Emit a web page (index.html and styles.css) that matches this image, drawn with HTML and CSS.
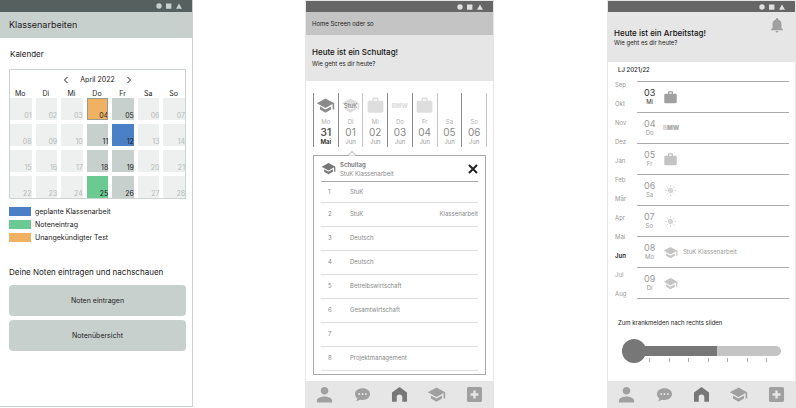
FILE: index.html
```html
<!DOCTYPE html>
<html lang="de">
<head>
<meta charset="utf-8">
<title>Klassenarbeiten</title>
<link rel="stylesheet" href="styles.css">
</head>
<body>
<svg class="sprite" aria-hidden="true">
  <symbol id="school" viewBox="0 0 24 24"><path d="M5 13.18v4L12 21l7-3.82v-4L12 17l-7-3.82zM12 3L1 9l11 6 9-4.91V17h2V9L12 3z"/></symbol>
  <symbol id="work" viewBox="0 0 24 24"><path d="M20 6h-4V4c0-1.11-.89-2-2-2h-4c-1.11 0-2 .89-2 2v2H4c-1.11 0-1.99.89-1.99 2L2 19c0 1.11.89 2 2 2h16c1.11 0 2-.89 2-2V8c0-1.11-.89-2-2-2zm-6 0h-4V4h4v2z"/></symbol>
  <symbol id="person" viewBox="2 2 20 20"><path d="M12 12c2.21 0 4-1.79 4-4s-1.79-4-4-4-4 1.79-4 4 1.79 4 4 4zm0 2c-2.67 0-8 1.34-8 4v2.500h16V18c0-2.66-5.33-4-8-4z"/></symbol>
  <symbol id="chat" viewBox="0 0 24 24"><path fill-rule="evenodd" d="M12 4C6.500 4 2.500 7.400 2.500 11.400c0 2.300 1.200 4.200 3 5.600L4 20.500l5.200-1.900c.9.200 1.800.3 2.800.3 5.500 0 9.500-3.400 9.500-7.500S17.500 4 12 4zM6.800 10.500h2v2h-2zM11 10.500h2v2h-2zM15.200 10.500h2v2h-2z"/></symbol>
  <symbol id="home" viewBox="0 0 24 24"><path d="M12 2.500L2.500 9.500V21H8.500v-5.500a3.500 3.500 0 0 1 7 0V21h6V9.500z"/></symbol>
  <symbol id="add" viewBox="0 0 24 24"><path d="M19.500 2.500h-15c-1.110 0-2 .9-2 2v15c0 1.100.89 2 2 2h15c1.100 0 2-.9 2-2v-15c0-1.100-.9-2-2-2zM17 13.500h-3.500V17h-3v-3.500H7v-3h3.500V7h3v3.500H17z"/></symbol>
  <symbol id="bell" viewBox="0 0 24 24"><path d="M12 22c1.100 0 2-.9 2-2h-4c0 1.100.89 2 2 2zm6-6v-5c0-3.070-1.640-5.640-4.500-6.320V4c0-.83-.67-1.500-1.500-1.500s-1.500.67-1.500 1.500v.68C7.630 5.360 6 7.920 6 11v5l-2 2v1h16v-1l-2-2z"/></symbol>
  <symbol id="sun" viewBox="0 0 24 24"><circle cx="12" cy="12" r="6"/><path fill="none" stroke="currentColor" stroke-width="2" d="M12 0v4M12 20v4M0 12h4M20 12h4M3.500 3.500L6.300 6.300M17.700 17.700l2.800 2.800M20.500 3.500L17.700 6.300M6.300 17.700l-2.800 2.800"/></symbol>
  <symbol id="status" viewBox="0 0 26 6"><circle cx="3" cy="3" r="2.700"/><path d="M10 .4h5.400v5.300H10zM23 .4l3 5.300h-6z"/></symbol>
</svg>
<main class="screens">

<section class="phone phone-exams">
  <div class="status"><svg><use href="#status"/></svg></div>
  <header class="bar bar-title"><h1>Klassenarbeiten</h1></header>
  <div class="content">
    <h2>Kalender</h2>
    <div class="calendar">
      <div class="month-nav">
        <button aria-label="Vorheriger Monat"><svg viewBox="0 0 6 8"><path d="M4.500 1l-3 3 3 3"/></svg></button>
        <span>April 2022</span>
        <button aria-label="Nächster Monat"><svg viewBox="0 0 6 8"><path d="M1.500 1l3 3-3 3"/></svg></button>
      </div>
      <table>
        <thead><tr><th>Mo</th><th>Di</th><th>Mi</th><th>Do</th><th>Fr</th><th>Sa</th><th>So</th></tr></thead>
        <tbody>
          <tr><td>01</td><td>02</td><td>03</td><td class="school test">04</td><td class="school">05</td><td>06</td><td>07</td></tr>
          <tr><td>08</td><td>09</td><td>10</td><td class="school">11</td><td class="school exam">12</td><td>13</td><td>14</td></tr>
          <tr><td>15</td><td>16</td><td>17</td><td class="school">18</td><td class="school">19</td><td>20</td><td>21</td></tr>
          <tr><td>22</td><td>23</td><td>24</td><td class="school grade">25</td><td class="school">26</td><td>27</td><td>28</td></tr>
        </tbody>
      </table>
    </div>
    <ul class="legend">
      <li><i class="exam"></i>geplante Klassenarbeit</li>
      <li><i class="grade"></i>Noteneintrag</li>
      <li><i class="test"></i>Unangekündigter Test</li>
    </ul>
    <h2>Deine Noten eintragen und nachschauen</h2>
    <div class="actions">
      <button>Noten eintragen</button>
      <button>Notenübersicht</button>
    </div>
  </div>
</section>

<section class="phone phone-home">
  <div class="status"><svg><use href="#status"/></svg></div>
  <header class="bar bar-small">Home Screen oder so</header>
  <div class="hero">
    <h1>Heute ist ein Schultag!</h1>
    <p>Wie geht es dir heute?</p>
  </div>
  <ol class="week">
    <li class="today"><div class="mark"><svg><use href="#school"/></svg></div><span>Mo</span><b>31</b><small>Mai</small></li>
    <li><div class="mark"><svg><use href="#school"/></svg><em>StuK</em></div><span>Di</span><b>01</b><small>Jun</small></li>
    <li><div class="mark"><svg><use href="#work"/></svg></div><span>Mi</span><b>02</b><small>Jun</small></li>
    <li><div class="mark"><strong>BMW</strong></div><span>Do</span><b>03</b><small>Jun</small></li>
    <li><div class="mark"><svg><use href="#work"/></svg></div><span>Fr</span><b>04</b><small>Jun</small></li>
    <li><div class="mark"></div><span>Sa</span><b>05</b><small>Jun</small></li>
    <li><div class="mark"></div><span>So</span><b>06</b><small>Jun</small></li>
  </ol>
  <article class="panel">
    <svg class="caret" viewBox="0 0 8 5"><path d="M0 4.500L4 .5l4 4"/></svg>
    <header>
      <svg class="panel-icon"><use href="#school"/></svg>
      <div><h2>Schultag</h2><p>StuK Klassenarbeit</p></div>
      <button aria-label="Schließen"><svg viewBox="0 0 10 10"><path d="M1 1l8 8M9 1L1 9"/></svg></button>
    </header>
    <table>
      <tr><td>1</td><td>StuK</td><td></td></tr>
      <tr><td>2</td><td>StuK</td><td>Klassenarbeit</td></tr>
      <tr><td>3</td><td>Deutsch</td><td></td></tr>
      <tr><td>4</td><td>Deutsch</td><td></td></tr>
      <tr><td>5</td><td>Betreibswirtschaft</td><td></td></tr>
      <tr><td>6</td><td>Gesamtwirtschaft</td><td></td></tr>
      <tr><td>7</td><td></td><td></td></tr>
      <tr><td>8</td><td>Projektmanagement</td><td></td></tr>
    </table>
  </article>
  <nav class="tabs">
    <a href="#profil" aria-label="Profil"><svg><use href="#person"/></svg></a>
    <a href="#chat" aria-label="Chat"><svg><use href="#chat"/></svg></a>
    <a href="#start" aria-label="Start" class="current"><svg><use href="#home"/></svg></a>
    <a href="#schule" aria-label="Schule"><svg><use href="#school"/></svg></a>
    <a href="#neu" aria-label="Neu"><svg><use href="#add"/></svg></a>
  </nav>
</section>

<section class="phone phone-work">
  <div class="status"><svg><use href="#status"/></svg></div>
  <div class="hero hero-work">
    <div><h1>Heute ist ein Arbeitstag!</h1><p>Wie geht es dir heute?</p></div>
    <button aria-label="Benachrichtigungen"><svg><use href="#bell"/></svg></button>
  </div>
  <h2 class="year">LJ 2021/22</h2>
  <div class="agenda">
    <ul class="months">
      <li>Sep</li><li>Okt</li><li>Nov</li><li>Dez</li><li>Jan</li><li>Feb</li><li>Mär</li><li>Apr</li><li>Mai</li><li class="current">Jun</li><li>Jul</li><li>Aug</li>
    </ul>
    <ol class="days">
      <li class="today"><div class="date"><b>03</b><span>Mi</span></div><svg><use href="#work"/></svg></li>
      <li><div class="date"><b>04</b><span>Do</span></div><strong><i>B</i>MW</strong></li>
      <li><div class="date"><b>05</b><span>Fr</span></div><svg><use href="#work"/></svg></li>
      <li class="free"><div class="date"><b>06</b><span>Sa</span></div><svg><use href="#sun"/></svg></li>
      <li class="free"><div class="date"><b>07</b><span>So</span></div><svg><use href="#sun"/></svg></li>
      <li><div class="date"><b>08</b><span>Mo</span></div><svg><use href="#school"/></svg><p>StuK Klassenarbeit</p></li>
      <li><div class="date"><b>09</b><span>Di</span></div><svg><use href="#school"/></svg></li>
    </ol>
  </div>
  <div class="sick">
    <label for="sick">Zum krankmelden nach rechts sliden</label>
    <input id="sick" type="range" min="0" max="7" value="0">
    <div class="ticks"><i></i><i></i><i></i><i></i><i></i><i></i><i></i></div>
  </div>
  <nav class="tabs">
    <a href="#profil" aria-label="Profil"><svg><use href="#person"/></svg></a>
    <a href="#chat" aria-label="Chat"><svg><use href="#chat"/></svg></a>
    <a href="#start" aria-label="Start" class="current"><svg><use href="#home"/></svg></a>
    <a href="#schule" aria-label="Schule"><svg><use href="#school"/></svg></a>
    <a href="#neu" aria-label="Neu"><svg><use href="#add"/></svg></a>
  </nav>
</section>

</main>
</body>
</html>
```
FILE: styles.css
```css
* { box-sizing: border-box; margin: 0; padding: 0; }
body { font-family: Inter, "Liberation Sans", sans-serif; font-size: 6px; line-height: 8px; color: #222; background: #fff; }
ul, ol { list-style: none; }
i, em { font-style: normal; }
button { font: inherit; color: inherit; background: none; border: 0; }
svg { display: block; fill: currentColor; }
.sprite { position: absolute; width: 0; height: 0; }

.screens { display: grid; grid-template-columns: 193fr 112fr 189fr 113fr 189fr; min-height: 100vh; }
.phone { display: flex; flex-direction: column; border: 1px solid #e6e6e6; }
.phone-home { grid-column: 3; }
.phone-work { grid-column: 5; }
.status { height: 11px; display: flex; align-items: center; justify-content: flex-end; padding-right: 10px; background: #666; color: #e0e0e0; }
.status svg { width: 26px; height: 6px; }
.bar { display: flex; align-items: center; }

/* Exams */
.phone-exams { border-color: #ccd4d2; border-width: 0 1px 1px 0; margin-bottom: 1px; }
.phone-exams .status { height: 12px; background: #56615f; color: #c8d0ce; }
.bar-title { height: 26px; padding-left: 9px; background: #c8d0ce; }
.bar-title h1 { font-size: 9px; font-weight: 400; }
.content { padding: 0 6px 0 9px; }
.content h2 { font-size: 8px; line-height: 10px; font-weight: 400; }
.content > h2:first-child { padding: 11px 0 10px 1px; }
.calendar { border: 1px solid #ccd4d2; }
.month-nav { display: flex; align-items: center; justify-content: center; gap: 11px; height: 19px; font-size: 7px; }
.month-nav svg { width: 6px; height: 8px; fill: none; stroke: #222; }
.calendar table, .calendar thead { display: block; }
.calendar tr { display: grid; grid-template-columns: repeat(7, 1fr); column-gap: 4px; }
.calendar tbody { display: grid; row-gap: 4px; }
.calendar th { font-size: 7px; line-height: 9px; font-weight: 400; padding-right: 1px; }
.calendar td { height: 22px; display: flex; align-items: flex-end; justify-content: flex-end; font-size: 7px; background: #eef0ef; color: #b4bbb9; }
.calendar td.school { background: #c8d0ce; color: #222; }
.calendar td.test, .legend .test { background: #f0b262; }
.calendar td.test { outline: 1px solid #9a9a90; outline-offset: -1px; }
.calendar td.exam, .legend .exam { background: #4a80c6; }
.calendar td.grade, .legend .grade { background: #6bca91; }
.legend { display: grid; gap: 4px; padding: 8px 0 25px; font-size: 7px; line-height: 9px; }
.legend li { display: flex; gap: 4px; }
.legend i { width: 22px; height: 9px; }
.actions { display: grid; gap: 4px; padding-top: 8px; }
.actions button { height: 31px; border-radius: 4px; background: #c8d0ce; font-size: 7px; }

/* Home */
.bar-small { height: 23px; padding-left: 6px; background: #c4c4c4; }
.hero { height: 46px; padding: 11px 6px 0; background: #e6e6e6; }
.hero h1 { font-size: 8px; line-height: 12px; font-weight: 500; color: #111; }
.hero p { font-size: 6px; line-height: 12px; }
.week { display: grid; grid-template-columns: repeat(7, 1fr); margin: 12px 6px 0 7px; border-right: 1px solid #c4c4c4; }
.week li { display: flex; flex-direction: column; align-items: center; height: 54px; border-left: 1px solid #c4c4c4; color: #b0b0b0; }
.week .today, .week .today + li, .week li:nth-child(4), .week li:nth-child(5), .week li:nth-child(7) { border-color: #8a8a8a; }
.mark { display: grid; place-items: center; height: 25px; color: #dedede; }
.mark > * { grid-area: 1 / 1; }
.mark svg { width: 19px; height: 19px; }
.mark em { color: #777; }
.mark strong { font-size: 6px; font-weight: 900; }
.today .mark { color: #8a8a8a; }
.week b { font-size: 10px; line-height: 12px; font-weight: 400; color: #888; }
.week small { font-size: 6px; color: #999; }
.week .today b { font-weight: 600; color: #555; }
.week .today small { font-weight: 600; color: #222; }
.panel { position: relative; margin: 8px 7px 6px; padding: 0 7px 3px; border: 1px solid #aaa; color: #888; }
.caret { position: absolute; left: 34px; top: -5px; width: 8px; height: 5px; fill: #fff; stroke: #aaa; }
.panel header { display: flex; align-items: center; gap: 4px; height: 26px; border-bottom: 1px solid #aaa; }
.panel header div { flex: 1; }
.panel h2 { font-size: 6px; line-height: 9px; font-weight: 600; color: #777; }
.panel p { line-height: 9px; }
.panel-icon { width: 15px; height: 15px; color: #777; }
.panel button svg { width: 10px; height: 10px; stroke: #222; stroke-width: 2; }
.panel table { width: 100%; border-collapse: collapse; }
.panel td { height: 24px; border-bottom: 1px solid #ddd; }
.panel tr:first-child td { height: 20px; }
.panel td:first-child { width: 29px; padding-left: 7px; }
.panel td:last-child { text-align: right; }
.tabs { display: grid; grid-template-columns: repeat(5, 1fr); height: 26px; margin-top: auto; background: #e6e6e6; }
.tabs a { display: grid; place-items: center; color: #a0a0a0; }
.tabs .current { color: #777; }
.tabs svg { width: 19px; height: 19px; }

/* Work */
.hero-work { display: flex; justify-content: space-between; height: 50px; padding: 4px 9px 0 6px; }
.hero-work div { padding-top: 11px; }
.hero-work p { line-height: 8px; }
.hero-work button { align-self: flex-start; color: #a0a0a0; }
.hero-work svg { width: 18px; height: 18px; }
.year { padding: 4px 10px 3px; font-size: 6px; line-height: 8px; font-weight: 500; }
.agenda { display: flex; padding: 0 6px 0 7px; }
.months { display: grid; grid-auto-rows: 19px; width: 22px; padding-top: 4px; margin-bottom: -13px; color: #999; }
.months .current { font-weight: 600; color: #222; }
.days { flex: 1; margin-top: 4px; border-top: 1px solid #aaa; align-self: flex-start; }
.days li { display: flex; align-items: center; height: 31px; border-bottom: 1px solid #aaa; color: #c4c4c4; }
.date { width: 25px; padding-left: 7px; display: grid; justify-items: center; justify-content: start; color: #999; }
.date b { font-size: 9px; line-height: 10px; font-weight: 400; }
.days svg { width: 15px; height: 15px; margin-left: 1px; }
.days .free svg { width: 11px; height: 11px; margin-left: 3px; color: #d8d8d8; }
.days .today { color: #a0a0a0; }
.days .today .date { color: #333; }
.days strong { font-size: 6px; font-weight: 900; color: #aaa; margin-left: 1px; }
.days strong i { color: #d0d0d0; }
.days p { padding-left: 5px; color: #999; }
.sick { display: grid; padding: 20px 14px 0; }
.sick label { padding-bottom: 12px; line-height: 8px; margin-left: -4px; }
.sick input { appearance: none; width: 100%; height: 24px; background: none; }
.sick input::-webkit-slider-runnable-track { height: 10px; border-radius: 5px; background: linear-gradient(to right, #777 60%, #c4c4c4 60%); }
.sick input::-webkit-slider-thumb { appearance: none; width: 24px; height: 24px; margin-top: -7px; border-radius: 50%; background: #777; }
.ticks { display: flex; justify-content: space-between; margin-top: -5px; padding: 0 14px 0 27px; }
.ticks i { width: 1px; height: 4px; background: #aaa; }
```
